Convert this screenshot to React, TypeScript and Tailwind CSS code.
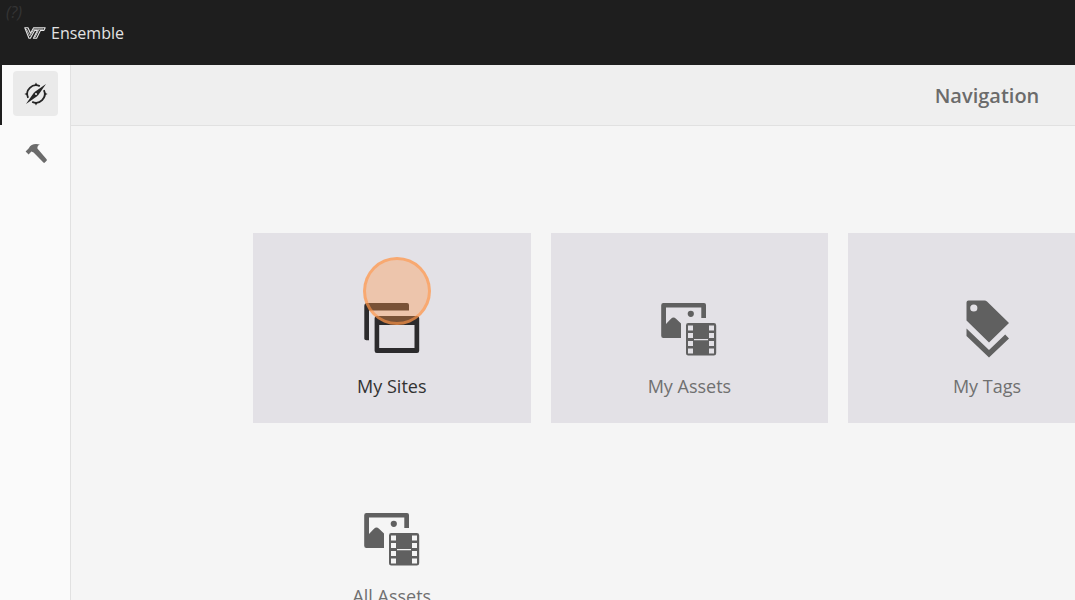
import type { ReactNode } from "react";

function VtLogo() {
  return (
    <svg width="22" height="12" viewBox="0 0 22 12" fill="none" stroke="#e6e6e6" strokeWidth="1.1" strokeLinejoin="round" aria-hidden="true">
      <path d="M0.8 0.8H4L6.5 6.2L9.6 0.8H21.2L19.8 3.4H16.4L12.6 11.2H9.4L13.4 3.4H10.6L6.3 11.2H5Z" />
      <path d="M2.4 2L5.8 8.8L10 2.1H19" strokeWidth="0.8" />
      <path d="M14.9 2.4L11 10.4" strokeWidth="0.8" />
    </svg>
  );
}

function CompassIcon() {
  return (
    <svg width="24" height="24" viewBox="0 0 24 24" aria-hidden="true">
      <g fill="none" stroke="#252525" strokeWidth="1.8">
        <path d="M15.8 4.1A8.8 8.8 0 0 0 4.1 15.8" />
        <path d="M19.9 8.2A8.8 8.8 0 0 1 8.2 19.9" />
      </g>
      <path d="M12 0.4L13.6 3.6H10.4ZM12 23.6L10.4 20.4H13.6ZM0.4 12L3.6 10.4V13.6ZM23.6 12L20.4 13.6V10.4Z" fill="#252525" />
      <path d="M22 2L13.8 13.8L10.2 10.2Z" fill="#252525" />
      <path d="M2 22L10.2 10.2L13.8 13.8Z" fill="#252525" />
      <circle cx="12" cy="12" r="1" fill="#eaeaea" />
    </svg>
  );
}

function HammerIcon() {
  return (
    <svg width="24" height="24" viewBox="0 0 24 24" fill="#6b6b6b" aria-hidden="true">
      <path d="M1.6 9.6L4.8 6.2C6.8 2.6 10.5 1.2 16 2.6C14.2 3.2 13.2 4.4 13.4 6.6L22.6 17.3Q23.2 18 22.6 18.7L20.8 20.6Q20.1 21.2 19.4 20.5L9.6 10.4L7.4 9.6L4.6 12.6Z" />
    </svg>
  );
}

function SitesIcon() {
  return (
    <svg width="60" height="60" viewBox="0 0 60 60" fill="none" aria-hidden="true">
      <path d="M2.3 40.8V8Q2.3 5 5.3 5H45Q47 5 47 7V12.5H7V42.2H4.3Q2.3 42.2 2.3 40.8Z" fill="#2c2b2d" />
      <path fillRule="evenodd" d="M14.8 18H55Q57.2 18 57.2 20.2V52.8Q57.2 55 55 55H14.8Q12.6 55 12.6 52.8V20.2Q12.6 18 14.8 18ZM17.2 27V50H52.5V27Z" fill="#2c2b2d" />
    </svg>
  );
}

function AssetsIcon() {
  return (
    <svg width="60" height="60" viewBox="0 0 60 60" fill="#606060" aria-hidden="true">
      <path d="M4.4 5H45Q47 5 47 7V20H42.3V9.5H7V26L12 20.7Q14.5 18.4 17 20.7L22 25.5V40H4.4Q2.2 40 2.2 37.8V7.2Q2.2 5 4.4 5Z" />
      <circle cx="31.8" cy="15.8" r="3.1" />
      <path
        fillRule="evenodd"
        d="M29.2 25H54.8Q57.2 25 57.2 27.4V55.2Q57.2 57.5 54.8 57.5H29.2Q27 57.5 27 55.2V27.4Q27 25 29.2 25ZM29 27.5V32.5H34V27.5ZM29 35V40H34V35ZM29 43V48H34V43ZM29 50.5V55.5H34V50.5ZM50 27.5V32.5H55V27.5ZM50 35V40H55V35ZM50 43V48H55V43ZM50 50.5V55.5H55V50.5ZM35 41V42.2H49V41Z"
      />
    </svg>
  );
}

function TagsIcon() {
  return (
    <svg width="60" height="60" viewBox="0 0 60 60" fill="#606060" aria-hidden="true">
      <path fillRule="evenodd" d="M11.5 2.5H27.5Q29 2.5 30 3.5L52 25L32 44.5L9.5 22.5V4.5Q9.5 2.5 11.5 2.5ZM16.8 6.4A3.6 3.6 0 1 0 16.8 13.6A3.6 3.6 0 1 0 16.8 6.4Z" />
      <path d="M9.5 30.5L32 52L48.2 36.5L52 40.5L32 59.5L9.5 38Z" />
    </svg>
  );
}

type TileProps = { label: string; icon: ReactNode; filled?: boolean; active?: boolean };

function Tile({ label, icon, filled = false, active = false }: TileProps) {
  return (
    <a
      href="#"
      className={`relative flex h-[190px] flex-col items-center pt-[65px] ${filled ? "bg-[#e3e1e6]" : ""} ${active ? "text-[#323232]" : "text-[#707070]"}`}
    >
      {icon}
      <span className="mt-4 text-lg leading-6">{label}</span>
      {active && (
        <span className="absolute top-6 left-[110px] size-[68px] rounded-full border-[3px] border-[#ff944a]/60 bg-[#ff9448]/37" />
      )}
    </a>
  );
}

export default function App() {
  return (
    <div className="flex h-screen flex-col overflow-hidden bg-[#f5f5f5] font-['Open_Sans','Noto_Sans',sans-serif]">
      <header className="relative flex h-[65px] shrink-0 items-center bg-[#1e1e1e] pl-6">
        <span className="absolute top-0 left-[6px] text-base leading-6 text-[#353535] italic">(?)</span>
        <a href="#" className="flex items-center gap-[5px] text-base text-[#e3e3e3]">
          <VtLogo />
          Ensemble
        </a>
      </header>
      <div className="flex min-h-0 grow">
        <nav aria-label="Main" className="w-[71px] shrink-0 border-r border-[#e1e1e1] bg-[#fafafa]">
          <div className="flex h-[60px] border-l-2 border-[#1e1e1e] pt-[6px] pl-[11px]">
            <button type="button" aria-label="Navigation" className="flex size-[45px] items-center justify-center rounded-[4px] bg-[#eaeaea]">
              <CompassIcon />
            </button>
          </div>
          <div className="flex h-[60px] border-l-2 border-transparent pt-[6px] pl-[11px]">
            <button type="button" aria-label="Tools" className="flex size-[45px] items-center justify-center rounded-[4px]">
              <HammerIcon />
            </button>
          </div>
        </nav>
        <main className="min-w-0 grow overflow-hidden">
          <div className="min-w-[1832px]">
            <div className="flex h-[61px] items-center justify-center border-b border-[#e1e1e1] bg-[#efefef] pt-px">
              <h1 className="text-xl font-semibold text-[#6b6b6b]">Navigation</h1>
            </div>
            <div className="mx-auto mt-[107px] grid max-w-[1468px] grid-cols-5 gap-5">
              <Tile label="My Sites" icon={<SitesIcon />} filled active />
              <Tile label="My Assets" icon={<AssetsIcon />} filled />
              <Tile label="My Tags" icon={<TagsIcon />} filled />
              <div className="col-span-2" />
              <Tile label="All Assets" icon={<AssetsIcon />} />
            </div>
          </div>
        </main>
      </div>
    </div>
  );
}
